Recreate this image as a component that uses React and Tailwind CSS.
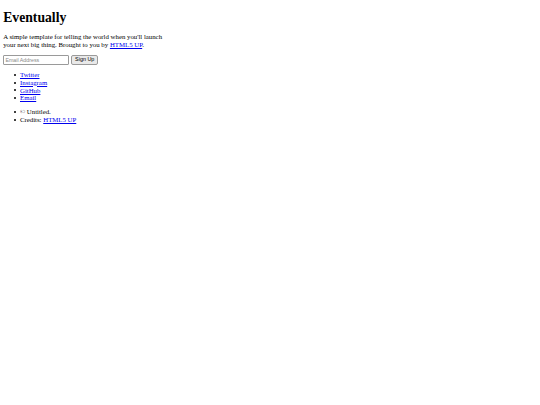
import React from 'react';

// Unstyled landing page, shown at roughly 0.4 scale
export default function App() {
  const serif = { fontFamily: '"Liberation Serif", "Times New Roman", serif' };
  const sans = { fontFamily: '"Liberation Sans", Arial, sans-serif' };

  const Item = ({ children }) => (
    <li className="flex items-center gap-[4px]">
      <span className="h-[2px] w-[2px] shrink-0 rounded-full bg-black" />
      <span>{children}</span>
    </li>
  );

  return (
    <div className="min-h-[405px] bg-white px-[3.2px] text-black" style={serif}>
      <h1 className="mt-[10px] mb-[7.6px] text-[13.7px] font-bold leading-[15.5px]">Eventually</h1>
      <p className="mb-[6px] text-[6.8px] leading-[7.9px]">
        A simple template for telling the world when you'll launch<br />
        your next big thing. Brought to you by{' '}
        <a href="#" className="text-[#0000ee] underline decoration-[#0000ee]">HTML5 UP</a>.
      </p>

      <form className="flex items-center gap-[2px]" onSubmit={(e) => e.preventDefault()}>
        <input
          type="email"
          placeholder="Email Address"
          className="h-[9.5px] w-[66px] rounded-[1px] border-[0.6px] border-[#9a9a9a] bg-white px-[1.2px] text-[5.3px] placeholder:text-[#8a8a8a] outline-none"
          style={sans}
        />
        <button
          type="submit"
          className="h-[10px] w-[27px] rounded-[2px] border-[0.6px] border-[#9a9a9a] bg-[#e9e9e9] text-[5.4px] leading-none"
          style={sans}
        >
          Sign Up
        </button>
      </form>

      <ul className="my-[6.2px] pl-[10.8px] text-[6.8px] leading-[7.7px]">
        <Item><a href="#" className="text-[#0000ee] underline decoration-[#0000ee]">Twitter</a></Item>
        <Item><a href="#" className="text-[#0000ee] underline decoration-[#0000ee]">Instagram</a></Item>
        <Item><a href="#" className="text-[#0000ee] underline decoration-[#0000ee]">GitHub</a></Item>
        <Item><a href="#" className="text-[#0000ee] underline decoration-[#0000ee]">Email</a></Item>
      </ul>

      <ul className="my-[6.4px] pl-[10.8px] text-[6.8px] leading-[7.7px]">
        <Item>© Untitled.</Item>
        <Item>Credits: <a href="#" className="text-[#0000ee] underline decoration-[#0000ee]">HTML5 UP</a></Item>
      </ul>
    </div>
  );
}
